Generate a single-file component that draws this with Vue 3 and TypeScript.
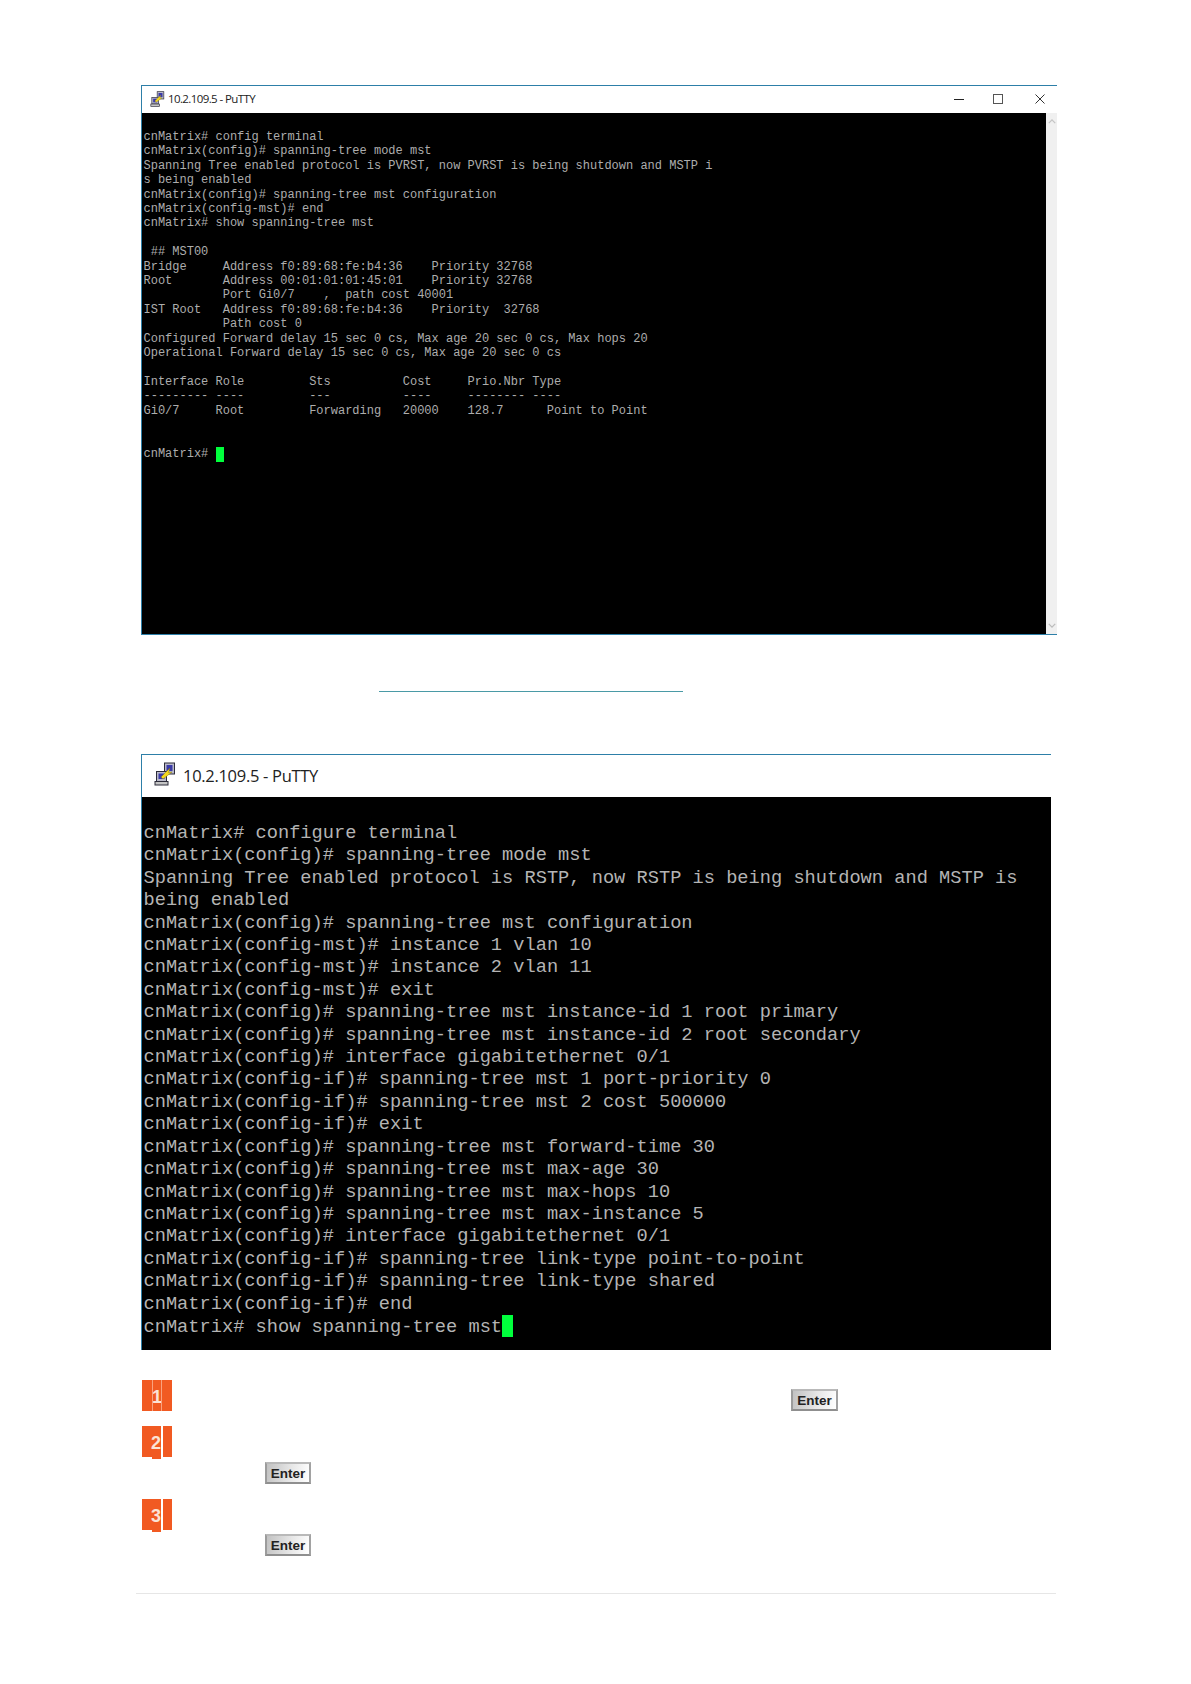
<script setup lang="ts">
const smallLines: string[] = [
  'cnMatrix# config terminal',
  'cnMatrix(config)# spanning-tree mode mst',
  'Spanning Tree enabled protocol is PVRST, now PVRST is being shutdown and MSTP i',
  's being enabled',
  'cnMatrix(config)# spanning-tree mst configuration',
  'cnMatrix(config-mst)# end',
  'cnMatrix# show spanning-tree mst',
  '',
  ' ## MST00',
  'Bridge     Address f0:89:68:fe:b4:36    Priority 32768',
  'Root       Address 00:01:01:01:45:01    Priority 32768',
  '           Port Gi0/7    ,  path cost 40001',
  'IST Root   Address f0:89:68:fe:b4:36    Priority  32768',
  '           Path cost 0',
  'Configured Forward delay 15 sec 0 cs, Max age 20 sec 0 cs, Max hops 20',
  'Operational Forward delay 15 sec 0 cs, Max age 20 sec 0 cs',
  '',
  'Interface Role         Sts          Cost     Prio.Nbr Type',
  '--------- ----         ---          ----     -------- ----',
  'Gi0/7     Root         Forwarding   20000    128.7      Point to Point',
  '',
  '',
]
const largeLines: string[] = [
  'cnMatrix# configure terminal',
  'cnMatrix(config)# spanning-tree mode mst',
  'Spanning Tree enabled protocol is RSTP, now RSTP is being shutdown and MSTP is',
  'being enabled',
  'cnMatrix(config)# spanning-tree mst configuration',
  'cnMatrix(config-mst)# instance 1 vlan 10',
  'cnMatrix(config-mst)# instance 2 vlan 11',
  'cnMatrix(config-mst)# exit',
  'cnMatrix(config)# spanning-tree mst instance-id 1 root primary',
  'cnMatrix(config)# spanning-tree mst instance-id 2 root secondary',
  'cnMatrix(config)# interface gigabitethernet 0/1',
  'cnMatrix(config-if)# spanning-tree mst 1 port-priority 0',
  'cnMatrix(config-if)# spanning-tree mst 2 cost 500000',
  'cnMatrix(config-if)# exit',
  'cnMatrix(config)# spanning-tree mst forward-time 30',
  'cnMatrix(config)# spanning-tree mst max-age 30',
  'cnMatrix(config)# spanning-tree mst max-hops 10',
  'cnMatrix(config)# spanning-tree mst max-instance 5',
  'cnMatrix(config)# interface gigabitethernet 0/1',
  'cnMatrix(config-if)# spanning-tree link-type point-to-point',
  'cnMatrix(config-if)# spanning-tree link-type shared',
  'cnMatrix(config-if)# end',
]
</script>

<template>
  <div class="page">
    <section class="win win-small">
      <header class="bar bar-small">
        <svg class="putty putty-small" viewBox="0 0 22 24">
          <rect x="10.5" y="1" width="10" height="11" fill="#b9b9c9" stroke="#2c2c3a" />
          <rect x="12.5" y="3" width="6" height="6" fill="#3a3aa8" />
          <rect x="2.5" y="9.5" width="10" height="10" fill="#b9b9c9" stroke="#2c2c3a" />
          <rect x="4.5" y="11.5" width="6" height="5.5" fill="#3a3aa8" />
          <rect x="1" y="19.5" width="13" height="3.5" fill="#c4c4c4" stroke="#2c2c3a" />
          <path d="M7 15 L16 6 L14.500 10.500 L18 10 L9 17 Z" fill="#f4d81e" stroke="#7a6a00" stroke-width=".4" />
        </svg>
        <span class="title-small">10.2.109.5 - PuTTY</span>
        <div class="controls">
          <svg viewBox="0 0 12 12" class="ctl"><path d="M1 6.5h10" stroke="#222" fill="none" /></svg>
          <svg viewBox="0 0 12 12" class="ctl"><rect x="1.5" y="1.5" width="9" height="9" stroke="#555" fill="none" /></svg>
          <svg viewBox="0 0 12 12" class="ctl ctl-close"><path d="M1.5 1.5l9 9M10.5 1.5l-9 9" stroke="#333" fill="none" /></svg>
        </div>
      </header>
      <div class="body-small">
        <pre class="term term-small"><template v-for="l in smallLines" :key="l">{{ l }}
</template>cnMatrix# <span class="cursor-small"> </span></pre>
        <aside class="scroll">
          <svg viewBox="0 0 10 6" class="arrow"><path d="M1 5l4-4 4 4" stroke="#c4c4c4" stroke-width="1.6" fill="none" /></svg>
          <svg viewBox="0 0 10 6" class="arrow"><path d="M1 1l4 4 4-4" stroke="#bcbcbc" stroke-width="1.6" fill="none" /></svg>
        </aside>
      </div>
    </section>

    <div class="rule-link"></div>

    <section class="win win-large">
      <header class="bar bar-large">
        <svg class="putty putty-large" viewBox="0 0 22 24">
          <rect x="10.5" y="1" width="10" height="11" fill="#b9b9c9" stroke="#2c2c3a" />
          <rect x="12.5" y="3" width="6" height="6" fill="#3a3aa8" />
          <rect x="2.5" y="9.5" width="10" height="10" fill="#b9b9c9" stroke="#2c2c3a" />
          <rect x="4.5" y="11.5" width="6" height="5.5" fill="#3a3aa8" />
          <rect x="1" y="19.5" width="13" height="3.5" fill="#c4c4c4" stroke="#2c2c3a" />
          <path d="M7 15 L16 6 L14.500 10.500 L18 10 L9 17 Z" fill="#f4d81e" stroke="#7a6a00" stroke-width=".4" />
        </svg>
        <span class="title-large">10.2.109.5 - PuTTY</span>
      </header>
      <pre class="term term-large"><template v-for="l in largeLines" :key="l">{{ l }}
</template>cnMatrix# show spanning-tree mst<span class="cursor-large"> </span></pre>
    </section>

    <div class="steps">
      <div class="step step-one">
        <div class="badge badge-split">1</div>
        <div class="key key-one">Enter</div>
      </div>
      <div class="step step-two">
        <div class="badge badge-tab">2</div>
        <div class="key key-two">Enter</div>
      </div>
      <div class="step step-three">
        <div class="badge badge-tab">3</div>
        <div class="key key-three">Enter</div>
      </div>
    </div>

    <div class="foot"></div>
  </div>
</template>

<style>
html, body { margin: 0; background: #fff; }
</style>

<style scoped>
.page {
  width: 1191px;
  height: 1684px;
  box-sizing: border-box;
  padding: 85px 0 0 141px;
  background: #fff;
  overflow: hidden;
}
.win {
  box-sizing: border-box;
  border: 1px solid #2d7fa8;
  border-right: 0;
}
.win-small { width: 916px; height: 550px; }
.win-large { width: 910px; height: 596px; margin-top: 62px; border-bottom: 0; }
.bar {
  display: flex;
  align-items: center;
  background: #fff;
  color: #222;
  font-family: "Open Sans", "Liberation Sans", sans-serif;
}
.bar-small { height: 27px; padding-left: 8px; padding-bottom: 2px; box-sizing: border-box; }
.bar-large { height: 42px; padding-left: 12px; padding-bottom: 2px; box-sizing: border-box; }
.putty { flex: none; }
.putty-small { width: 15px; height: 16px; margin-right: 3px; }
.putty-large { width: 22px; height: 24px; margin: 0 7px 2px 0; }
.title-small { font-size: 11.5px; letter-spacing: -0.6px; }
.title-large { font-size: 16.5px; letter-spacing: -0.3px; }
.controls {
  margin-left: auto;
  display: flex;
  gap: 27px;
  padding-right: 11px;
}
.ctl { width: 12px; height: 12px; }
.ctl-close { margin-left: 3px; }
.body-small { display: flex; height: 521px; }
.term {
  margin: 0;
  background: #000;
  font-family: "Liberation Mono", monospace;
  white-space: pre;
  overflow: hidden;
}
.term-small {
  flex: 1;
  box-sizing: border-box;
  padding: 17px 0 0 1.5px;
  color: #adadad;
  font-size: 12px;
  line-height: 14.4px;
}
.scroll {
  width: 11px;
  background: #f0f0f0;
  display: flex;
  flex-direction: column;
  justify-content: space-between;
  align-items: center;
  padding: 6px 0;
  box-sizing: border-box;
}
.arrow { width: 8px; height: 5px; }
.cursor-small {
  display: inline-block;
  width: 8px;
  height: 15px;
  background: #00ff3c;
  vertical-align: 0;
}
.term-large {
  box-sizing: border-box;
  height: 553px;
  padding: 25px 0 0 1.5px;
  color: #b4b4b4;
  font-size: 18.68px;
  line-height: 22.4px;
}
.cursor-large {
  display: inline-block;
  width: 11px;
  height: 22px;
  background: #00ff3c;
  vertical-align: 1px;
}
.rule-link {
  width: 304px;
  height: 1px;
  background: #4a9aa6;
  margin: 56px 0 0 238px;
}
.steps { margin-top: 30px; padding-left: 1px; }
.step { height: 46px; }
.step-one { display: flex; }
.step-two { height: 73px; }
.step-three { height: 94px; }
.badge {
  position: relative;
  box-sizing: border-box;
  width: 30px;
  height: 31px;
  background: #f15a22;
  color: #fbe3d6;
  font: bold 18px/34px "Liberation Sans", sans-serif;
  text-align: center;
}
.badge-tab { padding-right: 2px; }
.badge-split::before,
.badge-split::after,
.badge-tab::before {
  content: "";
  position: absolute;
  top: 0;
  bottom: 0;
  width: 1px;
  background: #f9a27f;
}
.badge-split::before { left: 10px; }
.badge-split::after { left: 19px; }
.badge-tab::before { left: 19px; width: 2px; background: #fff; }
.badge-tab::after {
  content: "";
  position: absolute;
  left: 10px;
  bottom: -2px;
  width: 9px;
  height: 2px;
  background: #f15a22;
}
.key {
  box-sizing: border-box;
  width: 46px;
  height: 22px;
  color: #222;
  font: bold 13.5px/20px "Liberation Sans", sans-serif;
  text-align: center;
  background: linear-gradient(100deg, #c2c2c2, #e6e6e6 55%, #fff);
  border: 2px solid;
  border-color: #b9b9b9 #a2a2a2 #8f8f8f #9c9c9c;
}
.key-one { width: 47px; margin: 9px 0 0 619px; }
.key-two { margin: 5px 0 0 123px; }
.key-three { margin: 4px 0 0 123px; }
.foot {
  width: 920px;
  height: 1px;
  background: #e6e6e6;
  margin-left: -5px;
}
</style>
